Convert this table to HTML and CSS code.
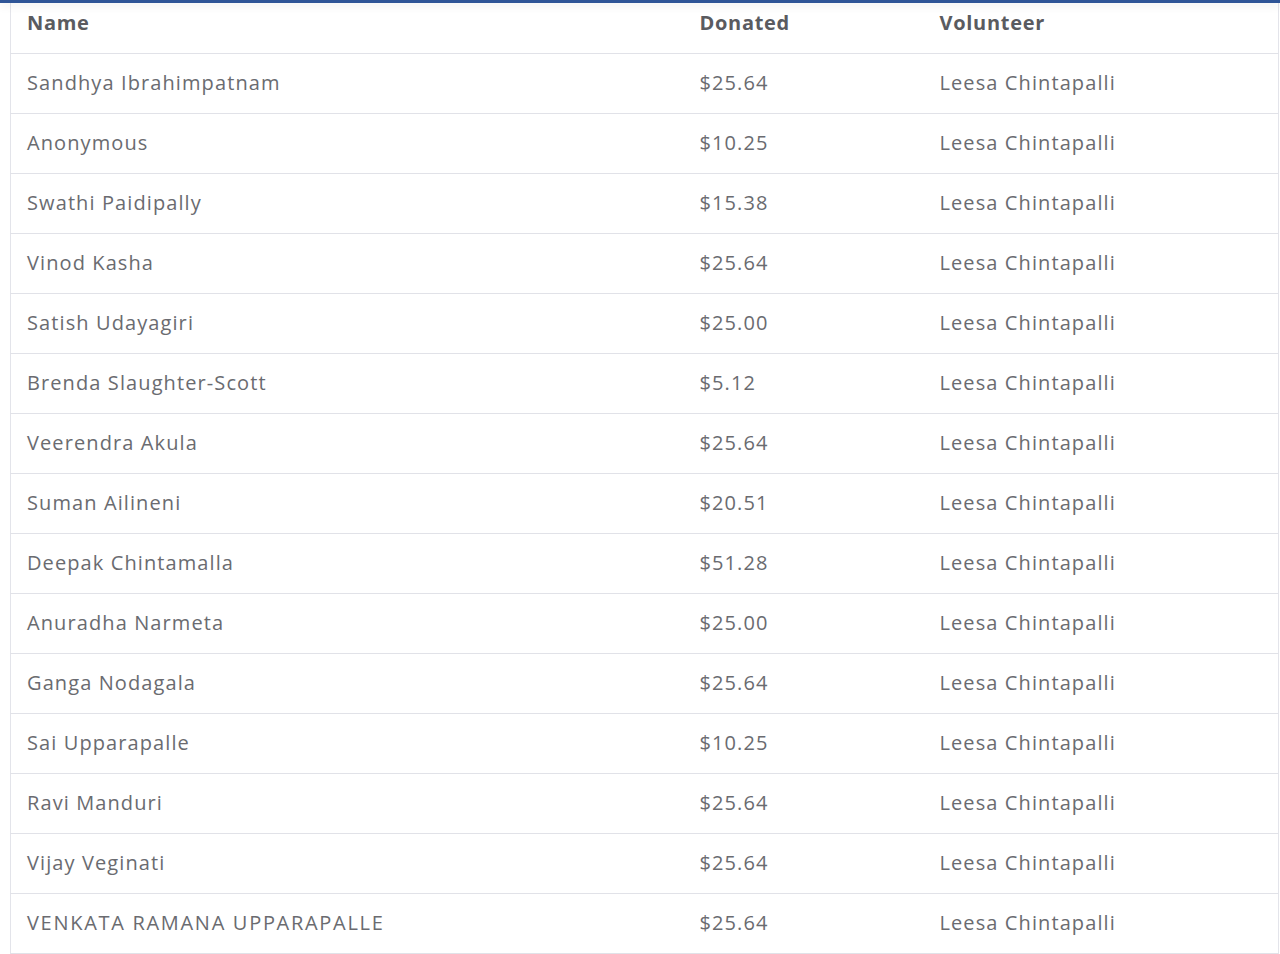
FILE: index.html
```html
<!DOCTYPE html>
<html lang="en">
<head>
    <meta charset="UTF-8">
    <meta name="viewport" content="width=device-width, initial-scale=1.0">
    <title>Donations</title>
    <link rel="stylesheet" href="styles.css">
</head>
<body>
    <div class="topbar"></div>
    <div class="wrap">
        <table class="donors">
            <thead>
                <tr>
                    <th class="col-name">Name</th>
                    <th class="col-amt">Donated</th>
                    <th>Volunteer</th>
                </tr>
            </thead>
            <tbody>
                <tr><td>Sandhya Ibrahimpatnam</td><td>$25.64</td><td>Leesa Chintapalli</td></tr>
                <tr><td>Anonymous</td><td>$10.25</td><td>Leesa Chintapalli</td></tr>
                <tr><td>Swathi Paidipally</td><td>$15.38</td><td>Leesa Chintapalli</td></tr>
                <tr><td>Vinod Kasha</td><td>$25.64</td><td>Leesa Chintapalli</td></tr>
                <tr><td>Satish Udayagiri</td><td>$25.00</td><td>Leesa Chintapalli</td></tr>
                <tr><td>Brenda Slaughter-Scott</td><td>$5.12</td><td>Leesa Chintapalli</td></tr>
                <tr><td>Veerendra Akula</td><td>$25.64</td><td>Leesa Chintapalli</td></tr>
                <tr><td>Suman Ailineni</td><td>$20.51</td><td>Leesa Chintapalli</td></tr>
                <tr><td>Deepak Chintamalla</td><td>$51.28</td><td>Leesa Chintapalli</td></tr>
                <tr><td>Anuradha Narmeta</td><td>$25.00</td><td>Leesa Chintapalli</td></tr>
                <tr><td>Ganga Nodagala</td><td>$25.64</td><td>Leesa Chintapalli</td></tr>
                <tr><td>Sai Upparapalle</td><td>$10.25</td><td>Leesa Chintapalli</td></tr>
                <tr><td>Ravi Manduri</td><td>$25.64</td><td>Leesa Chintapalli</td></tr>
                <tr><td>Vijay Veginati</td><td>$25.64</td><td>Leesa Chintapalli</td></tr>
                <tr><td class="caps">VENKATA RAMANA UPPARAPALLE</td><td>$25.64</td><td>Leesa Chintapalli</td></tr>
            </tbody>
        </table>
    </div>
</body>
</html>
```

FILE: styles.css
```css
* { margin: 0; padding: 0; box-sizing: border-box; }
body {
    font-family: "Open Sans", "Noto Sans", sans-serif;
    background: #fff;
    overflow: hidden;
}
.topbar {
    height: 3px;
    background: #2f5597;
    box-shadow: 0 2px 10px rgba(0,0,0,0.12);
    position: relative;
}
.wrap {
    padding: 0 1px 0 10px;
}
.donors {
    width: 100%;
    border-collapse: collapse;
    border-left: 1px solid #e3e4ea;
    border-right: 1px solid #e3e4ea;
}
.donors th {
    height: 50px;
    text-align: left;
    padding: 0 16px 10px;
    font-size: 20px;
    font-weight: 700;
    color: #5a5b60;
    letter-spacing: 0.7px;
    border-bottom: 1px solid #e1e2e8;
}
.donors td {
    height: 60px;
    padding: 0 16px 2px;
    font-size: 20px;
    font-weight: 400;
    color: #6a6b70;
    border-bottom: 1px solid #e1e2e8;
    letter-spacing: 1.1px;
}
.donors td.caps { letter-spacing: 1.7px; }
.col-name { width: 673px; }
.col-amt { width: 240px; }
```
